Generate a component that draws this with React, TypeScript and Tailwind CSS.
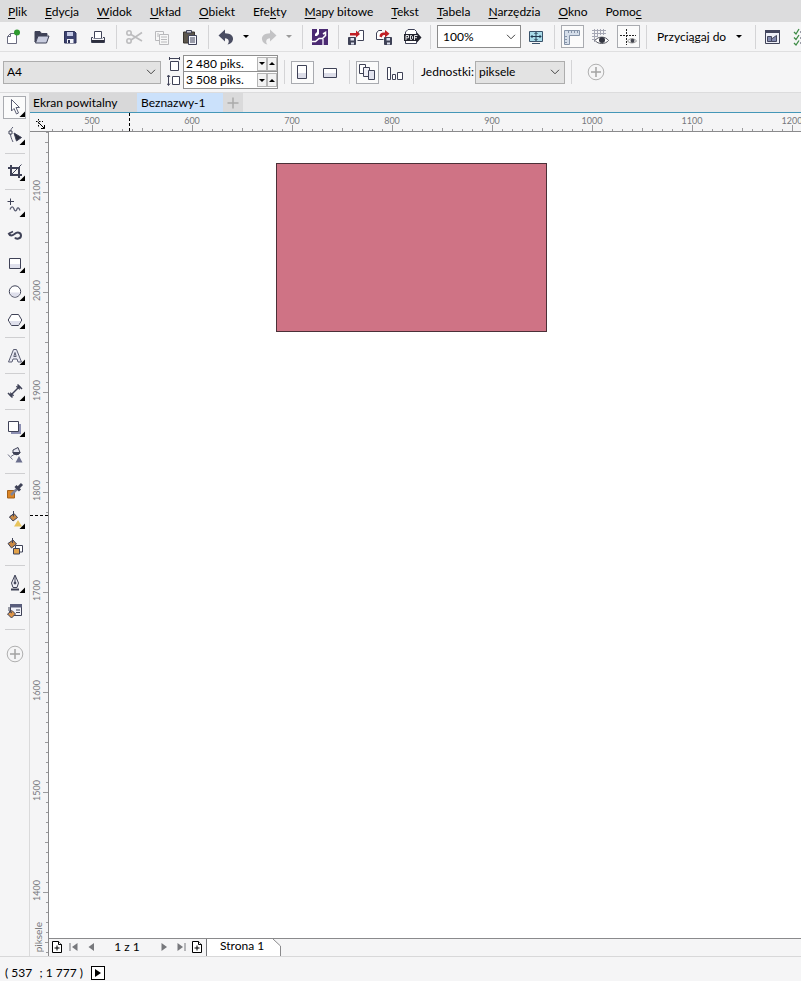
import React from 'react';

interface Children {
  children?: React.ReactNode;
}

interface ToolProps extends Children {
  label: string;
  flyout?: boolean;
  active?: boolean;
}

const DARK = '#3f4257';

const MENU: [string, string, string][] = [
  ['', 'P', 'lik'],
  ['', 'E', 'dycja'],
  ['', 'W', 'idok'],
  ['', 'U', 'kład'],
  ['', 'O', 'biekt'],
  ['Efe', 'k', 'ty'],
  ['', 'M', 'apy bitowe'],
  ['', 'T', 'ekst'],
  ['', 'T', 'abela'],
  ['', 'N', 'arzędzia'],
  ['', 'O', 'kno'],
  ['Pomo', 'c', ''],
];

const H_LABELS = ['500', '600', '700', '800', '900', '1000', '1100', '1200'];
const V_LABELS = ['', '2100', '2000', '1900', '1800', '1700', '1600', '1500', '1400', ''];
const TICKS = [10, 20, 30, 40, 60, 70, 80, 90];

const Icon: React.FC<Children> = ({ children }) => (
  <svg viewBox="0 0 20 20" className="h-5 w-5 shrink-0" fill="none" stroke={DARK} strokeWidth="1">
    {children}
  </svg>
);

const Tool: React.FC<ToolProps> = ({ label, active, children }) => (
  <button aria-label={label} className="flex h-7 w-7 shrink-0 items-center justify-center">
    <span
      className={
        active
          ? 'flex h-[23px] w-[23px] items-center justify-center border border-[#a9abb0] bg-[#fbfbfb]'
          : 'flex h-[23px] w-[23px] items-center justify-center'
      }
    >
      <Icon>{children}</Icon>
    </span>
  </button>
);

const SideTool: React.FC<ToolProps> = ({ label, active, flyout, children }) => (
  <Tool label={label} active={active}>
    {children}
    {flyout && <path d="M20 14.5V20H14.5Z" fill="#000" stroke="none" />}
  </Tool>
);

const VSep = () => <span className="mr-[3px] ml-1 h-6 w-px shrink-0 bg-[#d4d4d6]" />;
const HSep = () => <span className="mt-1 mb-[3px] h-px w-5 shrink-0 bg-[#cfcfd1]" />;

const Caret = ({ color }: { color: string }) => (
  <svg viewBox="0 0 6 3" className="h-[3px] w-[6px]">
    <path d="M0 0H6L3 3Z" fill={color} />
  </svg>
);

const DropButton = ({ label, color }: { label: string; color: string }) => (
  <button aria-label={label} className="flex h-7 w-[15px] shrink-0 items-center justify-center pr-1">
    <Caret color={color} />
  </button>
);

const SelectBox = ({ id, label, value, className }: { id: string; label: string; value: string; className: string }) => (
  <span className={`relative flex shrink-0 items-center border ${className}`}>
    <select id={id} aria-label={label} className="h-full w-full appearance-none bg-transparent pl-[3px] outline-none">
      <option>{value}</option>
    </select>
    <svg viewBox="0 0 10 6" className="pointer-events-none absolute right-1 h-[6px] w-[10px]" fill="none" stroke="#444">
      <path d="M1 .8L5 4.8L9 .8" />
    </svg>
  </span>
);

const Spinner = ({ label, value }: { label: string; value: string }) => (
  <div className="flex h-4 items-center">
    <input aria-label={label} defaultValue={value} className="h-4 w-[73px] bg-transparent pl-[2px] outline-none" />
    {['M0 0H6L3 3Z', 'M0 3H6L3 0Z'].map((d, i) => (
      <button
        key={d}
        aria-label={i ? `${label} +` : `${label} -`}
        className="flex h-[14px] w-[10px] items-center justify-center border border-[#b5b5b5] bg-[#f2f2f2]"
      >
        <svg viewBox="0 0 6 3" className="h-[3px] w-[6px] shrink-0">
          <path d={d} />
        </svg>
      </button>
    ))}
  </div>
);

const PlusCircle = () => (
  <Icon>
    <circle cx="10" cy="10" r="7.8" stroke="#b0b0b0" />
    <path d="M10 5V15M5 10H15" stroke="#a3a3a3" strokeWidth="1.5" />
  </Icon>
);

const MenuBar = () => (
  <nav className="flex h-[22px] shrink-0 items-center gap-[18px] overflow-hidden bg-[#dcdcdd] px-2 pt-px">
    {MENU.map(([pre, key, post]) => (
      <button key={pre + key + post} className="shrink-0 whitespace-nowrap">
        {pre}
        <span className="underline underline-offset-2">{key}</span>
        {post}
      </button>
    ))}
  </nav>
);

const StandardBar = () => (
  <div className="flex h-[30px] shrink-0 items-center overflow-hidden border-b border-[#dfdfe0] bg-[#f5f5f6]">
    <Tool label="Nowy">
      <path d="M6.5 6.5H12.5V16.5H3.5V9.5Z" fill="#fff" stroke="#6a6c80" />
      <path d="M6.5 6.5V9.5H3.5" stroke="#6a6c80" />
      <circle cx="13" cy="5.5" r="3" fill="#2e9a2e" stroke="none" />
    </Tool>
    <Tool label="Otwórz">
      <path d="M3 15V4.5H8L9.5 6.5H15V8.5H6L3 15Z" fill={DARK} />
      <path d="M6 9H17L14.5 16H3.5Z" fill="#c9cddf" />
    </Tool>
    <Tool label="Zapisz">
      <path d="M4.5 4.5H14.5L16 6V16H4.5Z" fill="#3d4370" stroke="#2c3157" />
      <path d="M7 5H13V9H7Z" fill="#c6cbe6" stroke="none" />
      <path d="M7 12H13.5V16H7Z" fill="#f3f4fa" stroke="none" />
      <path d="M8 13H10V16H8Z" fill="#2c3157" stroke="none" />
    </Tool>
    <Tool label="Drukuj">
      <path d="M6.5 12V4.5H13.5V12" fill="#fff" />
      <path d="M5 10.5H3.5V15.5H16.5V10.5H15" />
      <path d="M4 13H16V15.5H4Z" fill="#2c2e3d" stroke="none" />
      <path d="M5.5 11.5H14.5" stroke="#777a8c" />
    </Tool>
    <VSep />
    <Tool label="Wytnij">
      <g stroke="#bcbcbe" strokeWidth="1.6">
        <path d="M7 7.5L18 14M7 13L18 5.5" />
        <circle cx="5" cy="6" r="2.2" />
        <circle cx="5" cy="14" r="2.2" />
      </g>
    </Tool>
    <Tool label="Kopiuj">
      <g stroke="#b9b9bc" fill="#f7f7f7">
        <path d="M3.5 4.5H11.5V13.5H3.5Z" />
        <path d="M7.5 7.5H16.5V17.5H7.5Z" />
        <path d="M5 7H7M5 9H7M9 10H15M9 12.5H15M9 15H15" />
      </g>
    </Tool>
    <Tool label="Wklej">
      <path d="M3.5 5H14.5V16H3.5Z" fill="#5c564c" stroke="#39352f" />
      <path d="M6.5 3.5H11.5V6H6.5Z" fill="#c9cad4" />
      <path d="M8.5 8.5H16.5V17.5H8.5Z" fill="#f4f5fb" />
      <path d="M10 11H15M10 13H15M10 15H15" />
    </Tool>
    <VSep />
    <Tool label="Cofnij">
      <path d="M2.500 8.5L9 2.5V6.2C14.5 6.2 17.500 9 17 12.5C16.600 15.500 14 17 11.500 17.500C13.500 15.500 13.500 11.200 9 11.200V14.500Z" fill="#4a4d62" stroke="none" />
    </Tool>
    <DropButton label="Lista cofania" color="#000" />
    <Tool label="Ponów">
      <path d="M17.500 8.500L11 2.500V6.200C5.500 6.200 2.500 9 3 12.500C3.400 15.500 6 17 8.500 17.500C6.500 15.500 6.500 11.200 11 11.200V14.500Z" fill="#c3c3c5" stroke="none" />
    </Tool>
    <DropButton label="Lista ponawiania" color="#9a9a9a" />
    <VSep />
    <Tool label="Wyszukaj zawartość">
      <path d="M2 2H18V18H2Z" fill="#4b2a72" stroke="none" />
      <path d="M7 2H9V7L7 9H5V7L7 5Z" fill="#fff" stroke="none" />
      <path d="M2 14.5H5.5L9 11.500H12.500L15.500 8.500V5.500L13 7" stroke="#fff" strokeWidth="1.600" />
      <path d="M13 12V18" stroke="#e6def0" strokeWidth="1.500" />
    </Tool>
    <VSep />
    <Tool label="Importuj">
      <path d="M11.5 6.5L13.5 3.5H17.5V13.5H11.5" fill="#fff" />
      <path d="M2.5 10.5H9.5V17.5H2.5Z" fill={DARK} />
      <path d="M4.5 11H8V13.5H4.500ZM5 15.500H8V17.500H5Z" fill="#dfe2f0" stroke="none" />
      <path d="M4 8.500V6H10V3.500L14 7L10 10.500V8.500Z" fill="#c01f26" stroke="none" />
    </Tool>
    <Tool label="Eksportuj">
      <path d="M8 3.5H4.5L2.5 6V12.5H9.5" fill="#fff" />
      <path d="M10.5 10.5H17.5V17.5H10.5Z" fill={DARK} />
      <path d="M12.5 11H16V13.5H12.5ZM13 15.5H16V17.500H13Z" fill="#dfe2f0" stroke="none" />
      <path d="M5.500 9.500C5.500 6 8 5 11 5.500V3L15.500 6.700L11 10.500V8C9 8 8 8.500 8 10.500Z" fill="#c01f26" stroke="none" />
    </Tool>
    <Tool label="Publikuj do PDF">
      <path d="M3.5 8V5L6 2.500H12.500L14.500 4.500V8M3.500 13V16.500H14.500V14" fill="#fff" />
      <path d="M2 7H15V5.500L19.500 10.500L15 15.500V14H2Z" fill="#22232d" stroke="none" />
      <path d="M4 13V8.500H6.500V10.800H4M8.500 8.500V12.500H9.500L10.500 11.500V9.500L9.500 8.500ZM12.500 13V8.500H15.500M12.500 10.700H15" stroke="#fff" strokeWidth=".9" />
    </Tool>
    <VSep />
    <SelectBox id="zoom" label="Powiększenie" value="100%" className="mr-px ml-[3px] h-[23px] w-[84px] border-[#8b8b8b] bg-white pl-[2px]" />
    <Tool label="Podgląd pełnoekranowy">
      <path d="M3.5 4.5H16.5V14.5H3.5Z" fill="#a9dcea" stroke="#39526a" />
      <path d="M10 5.500V13.500M5 9.500H15M8.500 7L10 5.500L11.500 7M8.500 12L10 13.500L11.500 12M6.500 8L5 9.500L6.500 11M13.500 8L15 9.500L13.500 11" stroke="#20384f" />
      <path d="M6 16.500H14" stroke="#39526a" />
    </Tool>
    <span className="w-px" />
    <VSep />
    <Tool label="Linijki" active>
      <path d="M2.5 3.5H17.5V8.5H7.5V17.5H2.5Z" fill="#d5deea" stroke="#8593a8" />
      <path d="M6.5 4V6M9.5 4V6M12.5 4V6M15.5 4V6M3 9.5H5M3 12.5H5M3 15.5H5" stroke="#8593a8" />
    </Tool>
    <Tool label="Siatka">
      <path d="M2 3.5H16M2 6.5H16M2 9.5H8M2 12.5H6M4.5 2V15M7.5 2V9M10.5 2V8M13.5 2V8" stroke="#a5a7b4" />
      <path d="M5 13.5C8 9 15.500 9 18.500 13.500C15.500 17.500 8 17.500 5 13.500Z" fill="#fff" stroke="#55565f" />
      <circle cx="12" cy="13" r="3" fill="#333540" stroke="none" />
    </Tool>
    <Tool label="Prowadnice" active>
      <path d="M8.5 2V18M2 8.5H18" stroke="#222" strokeDasharray="2 1" />
      <path d="M9.5 14C12 11 16 11 18.5 14C16 16.5 12 16.5 9.5 14Z" fill="#fff" stroke="#888" />
      <circle cx="14.5" cy="13.8" r="2" fill="#444650" stroke="none" />
    </Tool>
    <VSep />
    <button className="ml-[7px] flex h-7 w-[94px] shrink-0 items-center justify-between pr-[9px]">
      Przyciągaj do
      <Caret color="#000" />
    </button>
    <VSep />
    <Tool label="Opcje">
      <path d="M2.500 3.500H16.500V16.500H2.500Z" fill="#eef0f8" />
      <path d="M2 3H17V6H2Z" fill="#44475f" stroke="none" />
      <path d="M4.500 9.500H8.500V14.500H4.500ZM8.500 12L13.500 8.500V14.500H8.500Z" fill="#8188ad" stroke="#44475f" />
    </Tool>
    <Tool label="Uruchamianie aplikacji">
      <path d="M3 5L5 7L8 2M3 10.5L5 12.5L8 8M3 16L5 18L8 13.5" stroke="#3d8b45" strokeWidth="1.3" />
      <path d="M9 5H17M9 11H17M9 16H17" />
    </Tool>
  </div>
);

const PropertyBar = () => (
  <div className="flex h-[41px] shrink-0 items-center overflow-hidden border-b border-[#dcdcdd] bg-[#f5f5f6] pl-[3px]">
    <SelectBox id="paper" label="Rozmiar strony" value="A4" className="h-[23px] w-[158px] border-[#adadad] bg-[#e3e3e3]" />
    <div className="ml-[6px] flex w-4 shrink-0 flex-col items-center">
      <svg viewBox="0 0 16 16" className="h-4 w-4" fill="none" stroke={DARK}>
        <path d="M3.5 5.5H11.5V14.5H3.5Z" fill="#fff" />
        <path d="M2.5 2.5H12.5M2.5 1V4M12.5 1V4" />
      </svg>
      <svg viewBox="0 0 16 16" className="h-4 w-4" fill="none" stroke={DARK}>
        <path d="M5.5 4.5H12.5V12.5H5.5Z" fill="#fff" />
        <path d="M1.5 3.5V13M0 5L1.5 3L3 5M0 11.5L1.5 13.5L3 11.5" />
      </svg>
    </div>
    <div className="flex w-[95px] shrink-0 flex-col divide-y divide-[#8f8f8f] border border-[#8f8f8f] bg-white">
      <Spinner label="Szerokość strony" value="2 480 piks." />
      <Spinner label="Wysokość strony" value="3 508 piks." />
    </div>
    <span className="ml-[2px]" />
    <VSep />
    <Tool label="Pionowo" active>
      <path d="M5.5 3.5H14.5V16.5H5.5Z" fill="#fff" />
      <path d="M6 11H14V16H6Z" fill="#dcdde8" stroke="none" />
    </Tool>
    <Tool label="Poziomo">
      <path d="M3.5 6.5H16.5V15.5H3.5Z" fill="#fff" />
      <path d="M4 11H16V15H4Z" fill="#dcdde8" stroke="none" />
    </Tool>
    <span className="w-px" />
    <VSep />
    <Tool label="Wszystkie strony" active>
      <path d="M2.5 2.5H8.5V11.5H2.5Z" fill="#fff" />
      <path d="M6.5 5.5H12.5V14.5H6.5Z" fill="#f0f0f7" />
      <path d="M11.5 8.5H17.5V17.5H11.5Z" fill="#e2e3ee" />
    </Tool>
    <Tool label="Bieżąca strona">
      <path d="M2.5 5.5H5.5V17.5H2.5ZM7.5 12.5H10.5V17.5H7.5ZM12.5 10.5H17.5V17.5H12.5Z" fill="#fff" />
    </Tool>
    <VSep />
    <label htmlFor="units" className="ml-1 w-[54px] shrink-0">
      Jednostki:
    </label>
    <SelectBox id="units" label="Jednostki" value="piksele" className="h-[23px] w-[90px] border-[#adadad] bg-[#e3e3e3]" />
    <span className="ml-[2px]" />
    <VSep />
    <button aria-label="Dostosuj" className="ml-[11px] shrink-0">
      <PlusCircle />
    </button>
  </div>
);

const Toolbox = () => (
  <aside className="flex w-[30px] shrink-0 flex-col items-center overflow-hidden border-r border-[#dadadb] bg-[#f5f5f6]">
    <SideTool label="Wskaźnik" active flyout>
      <path d="M6.5 2.5V14L9 11.5L11.5 17L13.5 16L11 10.5H14.5Z" fill="#fff" stroke="#5b5e73" />
    </SideTool>
    <SideTool label="Kształt" flyout>
      <path d="M8 2C4.500 5 4.500 10 8 17" stroke="#5b5e73" />
      <path d="M4 6H7V9H4Z" fill="#fff" />
      <path d="M9 8L16.500 12.500L11.500 16Z" fill="#2b2d3c" />
    </SideTool>
    <HSep />
    <SideTool label="Kadrowanie" flyout>
      <path d="M6 4V14H17M3 7H14V17" strokeWidth="2" />
      <path d="M6 14L16.500 3.500" />
    </SideTool>
    <HSep />
    <SideTool label="Krzywa" flyout>
      <path d="M5.500 1.500V8M2.500 4.500H9" />
      <path d="M5 12.500C6.500 9 8 9 9 12S11.500 14 12 12S14 10.500 15 13.500" strokeWidth="1.300" stroke="#5b5e73" />
    </SideTool>
    <SideTool label="Środki artystyczne">
      <path d="M3.500 8C5 11.500 7.500 10.500 9.500 9C12.500 6.500 16 7.500 16 10.500C16 14 11 14.500 10 12.500" strokeWidth="2" />
      <path d="M4 8.500L8 6.500" strokeWidth="1.500" />
    </SideTool>
    <SideTool label="Prostokąt" flyout>
      <path d="M4.5 5.5H15.500V15.500H4.500Z" fill="#fff" />
      <path d="M5 11H15V15H5Z" fill="#dfe0ec" stroke="none" />
    </SideTool>
    <SideTool label="Elipsa" flyout>
      <circle cx="10" cy="10.500" r="5.700" fill="#fff" />
      <path d="M5 11.500H15C14.500 17 5.500 17 5 11.500Z" fill="#dfe0ec" stroke="none" />
    </SideTool>
    <SideTool label="Wielokąt" flyout>
      <path d="M6.500 5.500H13.500L16.800 11L13.500 16.500H6.500L3.200 11Z" fill="#fff" />
      <path d="M4.500 12H15.500L13.200 16H6.800Z" fill="#dfe0ec" stroke="none" />
    </SideTool>
    <HSep />
    <SideTool label="Tekst" flyout>
      <path d="M8.500 4.500H11.500L16.500 17H13L12 14H8L7 17H3.500Z" fill="#e8e8f2" stroke="#5b5e73" />
      <path d="M10 7.500L11.200 11.500H8.800Z" fill="#fff" stroke="#5b5e73" />
    </SideTool>
    <HSep />
    <SideTool label="Wymiar" flyout>
      <path d="M5.500 14.500L14.500 5.500" strokeWidth="1.500" />
      <path d="M3 12L7.500 16.500M12.500 3.500L17 8" strokeWidth="1.500" />
      <path d="M5.500 11.500L9 14.500L5 15ZM11 5.500L14.500 8.500L15 5Z" fill={DARK} strokeWidth=".5" />
    </SideTool>
    <HSep />
    <SideTool label="Cień" flyout>
      <path d="M6 7H16V17H6Z" fill="#8c8fb2" stroke="none" />
      <path d="M3.500 4.500H13.500V14.500H3.500Z" fill="#fff" />
    </SideTool>
    <SideTool label="Przezroczystość">
      <path d="M8 5L13 2.500L15 7.500C14 10 10 10.500 8 8Z" fill="#e4e5ef" />
      <path d="M8 7.500L15 7.500C14 10 10 10.500 8 8Z" fill={DARK} />
      <path d="M9 9.500L6 11.500M3 9.500L7.500 14.500" stroke="#6b6e84" />
      <path d="M14 11L17.500 17.500H10.500Z" fill="#6a6e8c" stroke="none" />
    </SideTool>
    <HSep />
    <SideTool label="Próbnik koloru">
      <path d="M2.500 9.500H9.500V17H2.500Z" fill="#dc8524" stroke="#a4611a" />
      <path d="M6 14L12 8" stroke="#7f8399" strokeWidth="2.500" />
      <path d="M10.500 5L15 9.500M12.500 7.500L17 3" strokeWidth="3" />
    </SideTool>
    <SideTool label="Wypełnienie" flyout>
      <path d="M4.500 8L9 4.500L12.500 8.500L8 12Z" fill="#c98a46" />
      <path d="M8.500 2V7.500M4.500 8L9 4.500" />
      <path d="M13 11L17 17.500H9Z" fill="#e8c45c" stroke="none" />
    </SideTool>
    <SideTool label="Inteligentne wypełnienie">
      <path d="M3 6.500L8 3L11.500 7L6.500 11Z" fill="#c98a46" />
      <path d="M7.500 1V6" />
      <path d="M10.500 8.500H17.500V15H10.500Z" fill="#fff" />
      <path d="M8.500 11.500H14.500V17H8.500Z" fill="#e2a24a" />
    </SideTool>
    <HSep />
    <SideTool label="Pióro konturu" flyout>
      <path d="M10 2L13.500 10L12 14.500H8L6.500 10Z" fill="#f2f2f8" />
      <path d="M10 3V10" />
      <circle cx="10" cy="10" r="1" fill={DARK} />
      <path d="M6 16.500H14" strokeWidth="2" />
    </SideTool>
    <SideTool label="Edycja wypełnienia">
      <path d="M5.500 3.500H16.500V14.500H5.500Z" fill="#f2f3fa" />
      <path d="M5 3H17V6.500H5Z" fill="#5a5e7c" stroke="none" />
      <path d="M11 9H15M11 11.500H15" />
      <path d="M2.500 13L7 9.500L10.500 13L6.500 17Z" fill="#dc9448" />
      <path d="M4 6V10L7 12" />
    </SideTool>
    <HSep />
    <button aria-label="Dostosuj przybornik" className="flex h-[42px] shrink-0 items-center">
      <PlusCircle />
    </button>
  </aside>
);

const Tabs = () => (
  <div className="flex h-5 shrink-0 border-b border-[#4597b8] bg-[#e9e9ea]">
    <button className="w-[107px] bg-[#d8d8d9] pl-[3px] text-left">Ekran powitalny</button>
    <button className="w-[86px] bg-[#cbe1fb] pl-1 text-left">Beznazwy-1</button>
    <button aria-label="Nowa karta" className="flex w-5 items-center justify-center bg-[#dadadb]">
      <svg viewBox="0 0 12 12" className="h-3 w-3" stroke="#aaa" strokeWidth="1.5">
        <path d="M6 .5V11.5M.5 6H11.5" />
      </svg>
    </button>
  </div>
);

const TopRuler = () => (
  <div className="relative flex h-[19px] shrink-0 overflow-hidden border-b border-[#8a8a8c] bg-[#f5f5f6]">
    <div className="w-[18px] shrink-0 pt-[6px] pl-[5px]">
      <svg viewBox="0 0 12 12" className="h-3 w-3" fill="none" stroke="#000">
        <path d="M1 2.5H8M3.5 0V8" strokeDasharray="1.5 1.5" />
        <path d="M4 4L9.5 9.5M9.5 6V9.5H6" />
      </svg>
    </div>
    <div className="flex min-w-0 flex-1 overflow-hidden">
      <div className="-ml-[6px] flex">
        {H_LABELS.map((label) => (
          <div key={label} className="flex w-[100px] shrink-0 flex-col items-center justify-between">
            <span className="h-3 pt-[2px] text-[9px] leading-3">{label}</span>
            <svg viewBox="0 0 100 6" className="h-[6px] w-[100px]" stroke="#9a9a9c">
              <path d="M50.5 0V6M.5 3V6" />
              {TICKS.map((t) => (
                <path key={t} d={`M${t + 0.5} 4V6`} />
              ))}
            </svg>
          </div>
        ))}
      </div>
    </div>
    {/* cursor position marker */}
    <span className="absolute inset-y-0 left-[99px] border-l border-dashed border-black" />
  </div>
);

const LeftRuler = () => (
  <div className="relative w-[19px] shrink-0 overflow-hidden border-r border-[#8a8a8c] bg-[#f5f5f6]">
    <div className="-mt-[90px]">
      {V_LABELS.map((label, i) => (
        <div key={i} className="flex h-[100px] items-center justify-end">
          <span className="w-3 rotate-180 pt-1 text-center text-[9px] leading-3 [writing-mode:vertical-rl]">{label}</span>
          <svg viewBox="0 0 5 100" className="h-[100px] w-[5px]" stroke="#9a9a9c">
            <path d="M0 50.5H5M2 .5H5" />
            {TICKS.map((t) => (
              <path key={t} d={`M3 ${t + 0.5}H5`} />
            ))}
          </svg>
        </div>
      ))}
    </div>
    <span className="absolute bottom-1 left-[2px] w-3 rotate-180 text-[10px] leading-3 [writing-mode:vertical-rl]">piksele</span>
    <span className="absolute inset-x-0 top-[383px] border-t border-dashed border-black" />
  </div>
);

const NavButton = ({ label, d }: { label: string; d: string }) => (
  <button aria-label={label} className="flex h-4 w-[17px] items-center justify-center">
    <svg viewBox="0 0 12 12" className="h-3 w-3" fill="#77787c">
      <path d={d} />
    </svg>
  </button>
);

const AddPage = ({ label }: { label: string }) => (
  <button aria-label={label} className="flex h-4 w-4 items-center justify-center">
    <svg viewBox="0 0 12 14" className="h-[14px] w-3" fill="#fff" stroke="#000">
      <path d="M1.5 1.5H7.5L10.5 4.5V12.5H1.5Z" />
      <path d="M7.5 1.5V4.5H10.5M6 5.5V10.5M3.5 8H8.5" />
    </svg>
  </button>
);

const PageBar = () => (
  <div className="flex h-[18px] shrink-0 items-start border-t border-[#8a8a8c] bg-[#f5f5f6]">
    <AddPage label="Dodaj stronę przed" />
    <NavButton label="Pierwsza strona" d="M1.5 2H2.5V10H1.5ZM9.5 2V10L4 6Z" />
    <NavButton label="Poprzednia strona" d="M9 2V10L3.5 6Z" />
    <span className="w-14 text-center">1 z 1</span>
    <NavButton label="Następna strona" d="M3.5 2V10L9 6Z" />
    <NavButton label="Ostatnia strona" d="M9.5 2H10.5V10H9.5ZM2.5 2V10L8 6Z" />
    <AddPage label="Dodaj stronę po" />
    <span className="w-px" />
    <button className="flex h-full border-l border-[#77787c]">
      <span className="h-full bg-white pr-[9px] pl-[13px] leading-[14px]">Strona 1</span>
      <svg viewBox="0 0 8 17" className="h-[17px] w-2">
        <path d="M0 0L7.5 7V17H0Z" fill="#fff" />
        <path d="M0 0L7.5 7V17" fill="none" stroke="#8a8a8c" />
      </svg>
    </button>
  </div>
);

export default function App() {
  return (
    <div className="flex h-screen flex-col overflow-hidden bg-[#f5f5f6] font-['Lato','Noto_Sans',sans-serif] text-[12px] leading-4 text-black">
      <MenuBar />
      <StandardBar />
      <PropertyBar />
      <div className="flex min-h-0 flex-1">
        <Toolbox />
        <div className="flex min-w-0 flex-1 flex-col">
          <Tabs />
          <div className="flex min-h-0 flex-1 flex-col text-[#77787c]">
            <TopRuler />
            <div className="flex min-h-0 flex-1">
              <LeftRuler />
              <div className="flex min-w-0 flex-1 flex-col text-black">
                <main className="relative min-h-0 flex-1 overflow-hidden bg-white">
                  <div className="absolute top-[31px] left-[227px] h-[169px] w-[271px] border border-[#4b3038] bg-[#cf7385]" />
                </main>
                <PageBar />
              </div>
            </div>
          </div>
        </div>
      </div>
      <footer className="flex h-[25px] shrink-0 items-center gap-2 border-t border-[#d8d8d9] pt-2 pl-[5px]">
        <span className="flex w-[78px] justify-between">
          <span>( 537</span>
          <span>; 1 777 )</span>
        </span>
        <button aria-label="Dalej" className="flex h-[14px] w-[14px] items-center justify-center border border-black bg-white">
          <svg viewBox="0 0 6 8" className="h-2 w-[6px]">
            <path d="M0 0V8L6 4Z" />
          </svg>
        </button>
      </footer>
    </div>
  );
}
